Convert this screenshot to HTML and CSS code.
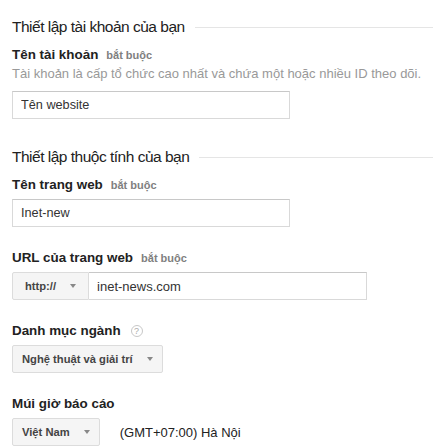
FILE: index.html
```html
<!DOCTYPE html>
<html lang="vi">
  <head>
    <meta charset="UTF-8" />
    <meta name="viewport" content="width=device-width, initial-scale=1.0" />
    <title>Thiết lập tài khoản</title>
    <link rel="stylesheet" href="styles.css">
  </head>
  <body>
    <div class="setup">

      <!-- Tài khoản -->
      <div class="section-title">Thiết lập tài khoản của bạn</div>

      <div class="field first">
        <label class="field-label">Tên tài khoản <span class="required">bắt buộc</span></label>
        <p class="field-help">Tài khoản là cấp tổ chức cao nhất và chứa một hoặc nhiều ID theo dõi.</p>
        <input class="text-input" type="text" value="Tên website" />
      </div>

      <!-- Thuộc tính -->
      <div class="section-title second">Thiết lập thuộc tính của bạn</div>

      <div class="field first">
        <label class="field-label">Tên trang web <span class="required">bắt buộc</span></label>
        <input class="text-input" type="text" value="Inet-new" />
      </div>

      <div class="field">
        <label class="field-label">URL của trang web <span class="required">bắt buộc</span></label>
        <div class="url-group">
          <div class="select select-protocol">http:// <span class="caret"></span></div>
          <input class="url-input" type="text" value="inet-news.com" />
        </div>
      </div>

      <div class="field">
        <label class="field-label">Danh mục ngành <span class="help-icon">?</span></label>
        <div class="select">Nghệ thuật và giải trí <span class="caret"></span></div>
      </div>

      <div class="field">
        <label class="field-label">Múi giờ báo cáo</label>
        <div class="timezone-row">
          <div class="select">Việt Nam <span class="caret"></span></div>
          <span class="timezone">(GMT+07:00) Hà Nội</span>
        </div>
      </div>

    </div>
  </body>
</html>
```

FILE: styles.css
```css
* {
  margin: 0;
  padding: 0;
  box-sizing: border-box;
}

body {
  font-family: "Liberation Sans", Arial, sans-serif;
  background: white;
  color: #222;
  overflow: hidden;
}

.setup {
  padding: 17px 0 0 12px;
}

.section-title {
  display: flex;
  align-items: center;
  gap: 10px;
  font-size: 15.5px;
  letter-spacing: -0.5px;
  line-height: 20px;
  color: #222;
  white-space: nowrap;
}

.section-title::after {
  content: "";
  flex: 1;
  height: 1px;
  background: #e5e5e5;
}

.section-title.second {
  margin-top: 28px;
}

.field {
  margin-top: 23px;
}

.field.first {
  margin-top: 10px;
}

.field-label {
  display: flex;
  align-items: center;
  font-size: 13.4px;
  line-height: 16px;
  font-weight: bold;
  color: #222;
  margin-bottom: 6px;
}

.required {
  font-size: 11px;
  font-weight: bold;
  color: #808080;
  margin-left: 8px;
}

.field-help {
  font-size: 13px;
  line-height: 16px;
  color: #999;
  white-space: nowrap;
  margin-top: -3px;
  margin-bottom: 9px;
}

.text-input,
.url-input {
  font-family: inherit;
  font-size: 13px;
  color: #333;
  height: 28px;
  padding: 0 8px;
  border: 1px solid #d9d9d9;
  border-top-color: #c8c8c8;
  outline: none;
  background: white;
}

.text-input {
  display: block;
  width: 278px;
  font-size: 12.7px;
}

.url-group {
  display: flex;
  width: 355px;
}

.url-input {
  flex: 1;
  border-left: none;
}

.select {
  display: inline-flex;
  align-items: center;
  height: 28px;
  padding: 0 9px;
  font-size: 11.2px;
  font-weight: bold;
  color: #444;
  background: #f5f5f5;
  border: 1px solid #dcdcdc;
  border-radius: 2px;
}

.select-protocol {
  padding: 0 12px;
  border-radius: 2px 0 0 2px;
}

.caret {
  width: 0;
  height: 0;
  margin-left: 14px;
  border-left: 3.5px solid transparent;
  border-right: 3.5px solid transparent;
  border-top: 4px solid #888;
}

.help-icon {
  display: inline-flex;
  align-items: center;
  justify-content: center;
  width: 12px;
  height: 12px;
  margin-left: 10px;
  border: 1px solid #c8c8c8;
  border-radius: 50%;
  font-size: 9px;
  font-weight: normal;
  color: #aaa;
}

.timezone-row {
  display: flex;
  align-items: center;
}

.timezone {
  font-size: 13px;
  color: #222;
  margin-left: 20px;
}
```
